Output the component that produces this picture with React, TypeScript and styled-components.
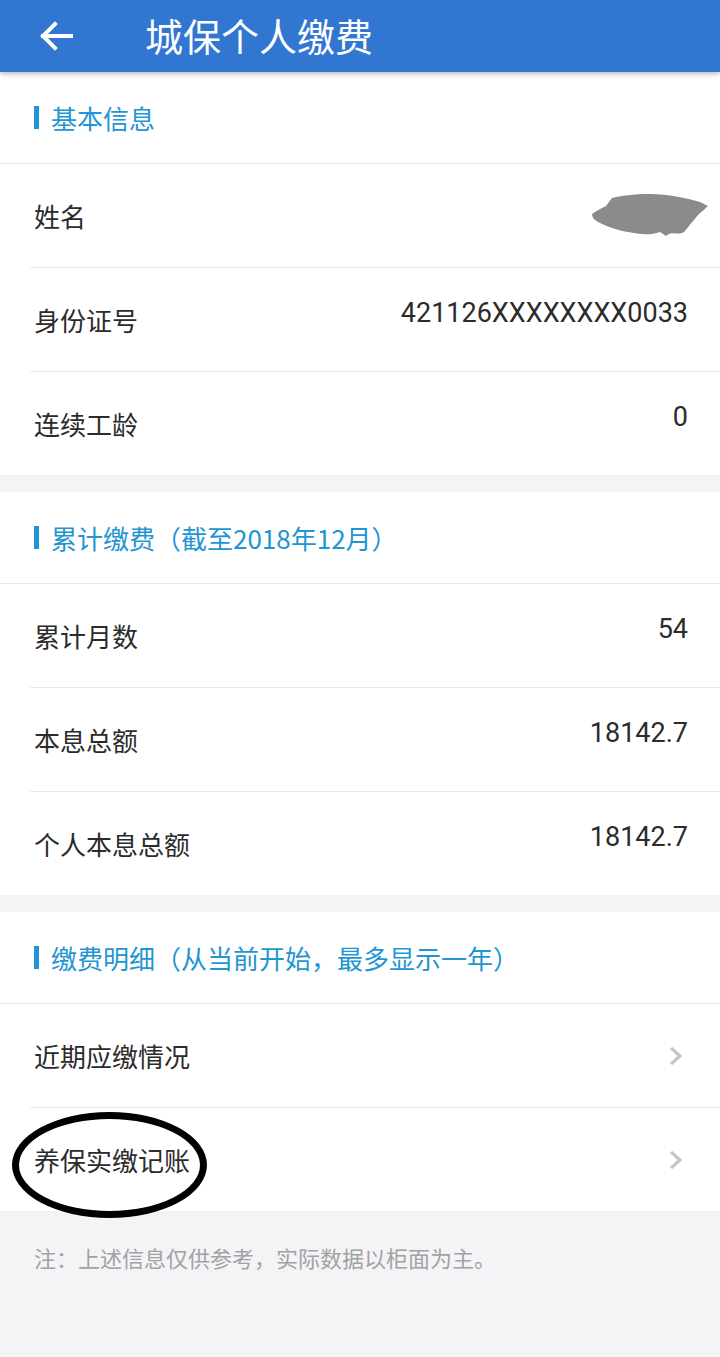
import React from 'react';
import styled, { createGlobalStyle } from 'styled-components';

const GlobalStyle = createGlobalStyle`
  html, body {
    margin: 0;
    padding: 0;
    background: #f4f4f6;
    font-family: "Noto Sans CJK SC", "Noto Sans", sans-serif;
  }
`;

const Page = styled.div`
  width: 720px;
  min-height: 1357px;
  background: #f4f4f6;
`;

const Header = styled.header`
  position: relative;
  z-index: 1;
  height: 72px;
  display: flex;
  align-items: center;
  background: #3176d1;
  box-shadow: 0 2px 5px rgba(0, 0, 0, 0.28);
  color: #fff;
`;

const BackButton = styled.div`
  width: 145px;
  height: 72px;
  display: flex;
  align-items: center;
  padding-left: 38px;
  box-sizing: border-box;
`;

const Title = styled.h1`
  margin: 0;
  font-size: 38px;
  font-weight: 400;
  line-height: 1;
  padding-bottom: 2px;
`;

const Section = styled.section`
  background: #fff;
  & + & {
    margin-top: 17px;
  }
`;

const SectionTitle = styled.div`
  height: 91px;
  display: flex;
  align-items: center;
  padding-left: 34px;
  border-bottom: 1px solid #e8e8ea;
  color: #1f95d3;
  font-size: 26px;
  line-height: 1;

  &::before {
    content: '';
    width: 5px;
    height: 23px;
    background: #1f95d3;
    margin-right: 12px;
  }
`;

const Row = styled.div`
  position: relative;
  height: 103px;
  margin-left: 30px;
  padding: 0 32px 0 4px;
  display: flex;
  align-items: center;
  justify-content: space-between;
  & + & {
    border-top: 1px solid #e8e8ea;
  }
`;

const Label = styled.span`
  font-size: 26px;
  color: #2b2b2b;
  line-height: 1;
`;

const Value = styled.span`
  font-family: Roboto, "Noto Sans CJK SC", sans-serif;
  font-size: 27px;
  color: #2b2b2b;
  line-height: 1;
  padding-bottom: 12px;
`;

const Blob = styled.svg`
  margin-right: -22px;
  margin-top: -2px;
`;

const Chevron = styled.svg`
  margin-right: 4px;
`;

const Circle = styled.div`
  position: absolute;
  left: -18px;
  top: 4px;
  width: 195px;
  height: 106px;
  box-sizing: border-box;
  border: 7px solid #000;
  border-radius: 50%;
  pointer-events: none;
`;

const Note = styled.p`
  margin: 0;
  padding: 33px 34px 0;
  font-size: 22px;
  color: #a2a2a6;
  line-height: 1.2;
`;

const ArrowLeft = () => (
  <svg width="36" height="32" viewBox="0 0 36 32">
    <path d="M33 16H5M17 4L5 16l12 12" fill="none" stroke="#fff" strokeWidth="4" strokeLinecap="square" />
  </svg>
);

const RightArrow = () => (
  <Chevron width="16" height="20" viewBox="0 0 16 20">
    <path d="M3 2l9 8-9 8" fill="none" stroke="#c6c6c8" strokeWidth="3.2" />
  </Chevron>
);

// 姓名被涂抹遮挡
const NameSmear = () => (
  <Blob width="120" height="46" viewBox="0 0 120 46">
    <path
      d="M2 22 C8 18 12 16 16 14 L22 6 C30 4 44 2 60 2 C78 2 96 6 110 10 L118 14 C112 20 108 22 104 28 C100 32 98 36 94 40 C88 44 82 38 76 44 L70 40 C60 44 48 42 38 40 C26 38 16 34 8 30 C4 28 2 25 2 22 Z"
      fill="#8b8b8b"
    />
  </Blob>
);

export default function App() {
  return (
    <Page>
      <GlobalStyle />
      <Header>
        <BackButton>
          <ArrowLeft />
        </BackButton>
        <Title>城保个人缴费</Title>
      </Header>

      <Section>
        <SectionTitle>基本信息</SectionTitle>
        <Row>
          <Label>姓名</Label>
          <NameSmear />
        </Row>
        <Row>
          <Label>身份证号</Label>
          <Value>421126XXXXXXXX0033</Value>
        </Row>
        <Row>
          <Label>连续工龄</Label>
          <Value>0</Value>
        </Row>
      </Section>

      <Section>
        <SectionTitle>累计缴费（截至2018年12月）</SectionTitle>
        <Row>
          <Label>累计月数</Label>
          <Value>54</Value>
        </Row>
        <Row>
          <Label>本息总额</Label>
          <Value>18142.7</Value>
        </Row>
        <Row>
          <Label>个人本息总额</Label>
          <Value>18142.7</Value>
        </Row>
      </Section>

      <Section>
        <SectionTitle>缴费明细（从当前开始，最多显示一年）</SectionTitle>
        <Row>
          <Label>近期应缴情况</Label>
          <RightArrow />
        </Row>
        <Row>
          <Label>养保实缴记账</Label>
          <RightArrow />
          <Circle />
        </Row>
      </Section>

      <Note>注：上述信息仅供参考，实际数据以柜面为主。</Note>
    </Page>
  );
}
